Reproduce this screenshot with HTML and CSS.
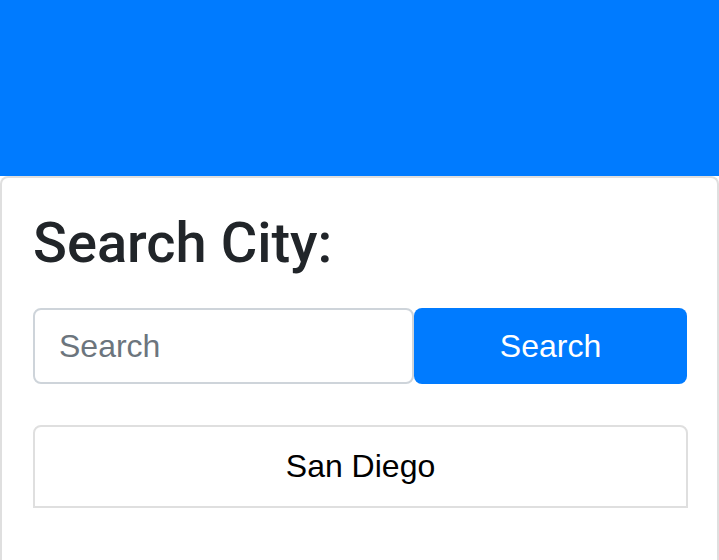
FILE: index.html
```html
<!DOCTYPE html>
<html>
<head>
<meta charset="utf-8">
<link rel="stylesheet" href="styles.css">
</head>
<body>
<div class="header"></div>
<div class="card">
  <h3 class="title">Search City:</h3>
  <form class="search-row">
    <input class="search-input" type="text" placeholder="Search">
    <button class="search-btn" type="button">Search</button>
  </form>
  <ul class="list">
    <li class="list-item">San Diego</li>
  </ul>
</div>
</body>
</html>
```
FILE: styles.css
```css
html, body {
  margin: 0;
  padding: 0;
  background: #fff;
  font-family: "Liberation Sans", Arial, sans-serif;
  overflow: hidden;
}
.header {
  height: 176px;
  background: #007bff;
}
.card {
  width: 719px;
  box-sizing: border-box;
  border: 2px solid #dfdfdf;
  border-bottom: none;
  border-radius: 8px 8px 0 0;
  padding: 32px 30px 60px 31px;
}
.title {
  margin: 0;
  font-family: Roboto, "Liberation Sans", sans-serif;
  font-size: 56px;
  line-height: 67px;
  font-weight: 500;
  color: #212529;
}
.search-row {
  display: flex;
  margin: 31px 0 0 0;
}
.search-input {
  width: 381px;
  height: 76px;
  box-sizing: border-box;
  border: 2px solid #ced4da;
  border-radius: 8px;
  padding: 0 24px;
  font-family: "Liberation Sans", Arial, sans-serif;
  font-size: 32px;
  color: #495057;
  outline: none;
}
.search-input::placeholder {
  color: #6c757d;
}
.search-btn {
  width: 274px;
  height: 76px;
  margin-left: 0;
  border: none;
  border-radius: 8px;
  background: #007bff;
  color: #fff;
  font-family: "Liberation Sans", Arial, sans-serif;
  font-size: 32px;
  padding: 0;
}
.list {
  list-style: none;
  margin: 41px 0 0 0;
  padding: 0;
  width: 655px;
}
.list-item {
  height: 83px;
  box-sizing: border-box;
  border: 2px solid #dfdfdf;
  border-radius: 8px 8px 0 0;
  display: flex;
  align-items: center;
  justify-content: center;
  font-size: 32px;
  color: #000;
}
```
